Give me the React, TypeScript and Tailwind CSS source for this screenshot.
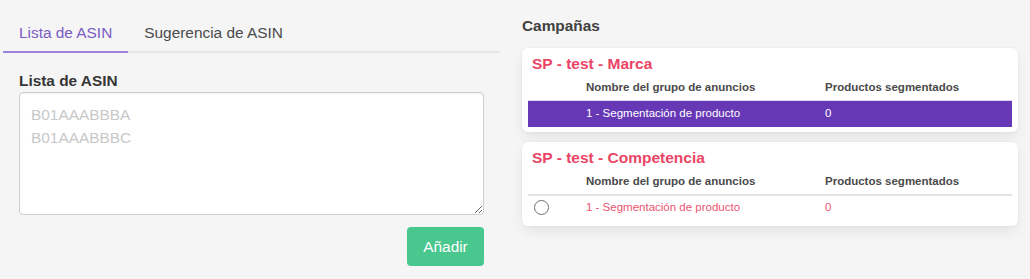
import React from 'react';

const rows = [
  { title: 'SP - test - Marca', group: '1 - Segmentación de producto', products: '0', selected: true },
  { title: 'SP - test - Competencia', group: '1 - Segmentación de producto', products: '0', selected: false },
];

export default function App() {
  return (
    <div className="min-h-[279px] w-[1030px] bg-[#f5f5f5] pl-[3px] flex gap-[22px] font-['Liberation_Sans',Arial,sans-serif]">
      {/* Left column */}
      <div className="w-[497px] flex flex-col">
        {/* Tabs */}
        <div className="mt-[14px] flex border-b-2 border-[#e6e6e6] text-[15.4px] leading-[23px]">
          <div className="-mb-[2px] px-4 pt-[7px] pb-[7px] border-b-2 border-[#9b84dc] text-[#7a5cc4]">Lista de ASIN</div>
          <div className="-mb-[2px] px-4 pt-[7px] pb-[7px] border-b-2 border-transparent text-[#4a4a4a]">Sugerencia de ASIN</div>
        </div>

        <div className="px-4 flex flex-col">
          <label className="mt-4 text-[15.4px] leading-[23px] font-bold text-[#363636]">Lista de ASIN</label>
          <textarea
            className="h-[123px] w-full resize-y rounded-[4px] border border-[#cfcfcf] bg-white pl-[11px] pr-3 pt-[10px] text-[15.4px] leading-[23px] text-[#363636] placeholder:text-[#c8c8c8] outline-none shadow-[inset_0_1px_2px_rgba(10,10,10,0.05)]"
            placeholder={'B01AAABBBA\nB01AAABBBC'}
          />
          <div className="mt-3 flex justify-end">
            <button className="w-[77px] h-[39px] rounded-[4px] bg-[#48c78e] text-white text-[15.4px]">Añadir</button>
          </div>
        </div>
      </div>

      {/* Right column */}
      <div className="w-[496px] flex flex-col">
        <h2 className="mt-[14px] text-[15.4px] leading-[23px] font-bold text-[#404040]">Campañas</h2>
        <div className="mt-[11px] flex flex-col gap-[10px]">
          {rows.map((c) => (
            <div
              key={c.title}
              className="bg-white rounded-[6px] px-[6px] pt-[4px] pb-[5px] shadow-[0_6px_14px_-2px_rgba(10,10,10,0.09),0_0_0_1px_rgba(10,10,10,0.02)]"
            >
              <div className="pl-[4px] text-[15.5px] leading-[24px] font-bold text-[#ea4565]">{c.title}</div>
              <div
                className={
                  c.selected
                    ? 'flex h-[25px] items-center border-b border-[#ddd3f2] text-[11.5px] font-bold text-[#4a4a4a]'
                    : 'flex h-[26px] items-center border-b-2 border-[#e3e3e3] text-[11.5px] font-bold text-[#4a4a4a]'
                }
              >
                <div className="w-[58px]" />
                <div className="w-[239px]">Nombre del grupo de anuncios</div>
                <div>Productos segmentados</div>
              </div>
              {c.selected ? (
                <div className="flex h-[26px] items-center bg-[#6638b6] text-[11.5px] text-white">
                  <div className="w-[58px]" />
                  <div className="w-[239px]">{c.group}</div>
                  <div>{c.products}</div>
                </div>
              ) : (
                <div className="flex h-[23px] items-center text-[11.5px] text-[#ec5473] mb-[2px]">
                  <div className="w-[58px] pl-[6px] flex items-center">
                    <span className="block w-[15px] h-[15px] rounded-full border-[1.5px] border-[#6e6e6e] bg-white" />
                  </div>
                  <div className="w-[239px]">{c.group}</div>
                  <div>{c.products}</div>
                </div>
              )}
            </div>
          ))}
        </div>
      </div>
    </div>
  );
}
